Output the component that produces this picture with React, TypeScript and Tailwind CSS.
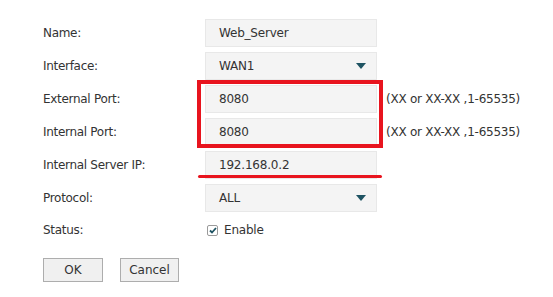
const font = { fontFamily: '"DejaVu Sans", Verdana, sans-serif' };

function Field({ value, select }: { value: string; select?: boolean }) {
  return (
    <div className="flex h-[28px] w-[172px] items-center justify-between border border-[#e8e8e8] bg-[#f4f4f4] pl-[13px] pr-[10px] text-[12px] tracking-[-0.2px] text-[#333]">
      <span>{value}</span>
      {select && (
        <svg width="10" height="6" viewBox="0 0 10 6">
          <path d="M0 0h10L5 6z" fill="#1e5362" />
        </svg>
      )}
    </div>
  );
}

function Row({ label, children, hint }: { label: string; children: React.ReactNode; hint?: boolean }) {
  return (
    <div className="flex items-center">
      <div className="w-[162px] text-[12px] tracking-[-0.3px] text-[#333]">{label}</div>
      {children}
      {hint && (
        <span className="ml-[9px] text-[12px] tracking-[-0.25px] text-[#333]">(XX or XX-XX ,1-65535)</span>
      )}
    </div>
  );
}

export default function App() {
  return (
    <div className="relative h-[297px] w-[553px] bg-white" style={font}>
      <div className="flex flex-col gap-[5px] pl-[43px] pt-[19px]">
        <Row label="Name:">
          <Field value="Web_Server" />
        </Row>
        <Row label="Interface:">
          <Field value="WAN1" select />
        </Row>
        <Row label="External Port:" hint>
          <Field value="8080" />
        </Row>
        <Row label="Internal Port:" hint>
          <Field value="8080" />
        </Row>
        <Row label="Internal Server IP:">
          <Field value="192.168.0.2" />
        </Row>
        <Row label="Protocol:">
          <Field value="ALL" select />
        </Row>
        <Row label="Status:">
          <div className="flex h-[26px] items-center gap-[6px] pl-[2px] text-[12px] tracking-[-0.2px] text-[#333]">
            <span className="flex h-[11px] w-[11px] items-center justify-center rounded-[2px] border border-[#9a9a9a] bg-white">
              <svg width="8" height="7" viewBox="0 0 8 7">
                <path d="M1 3.5l2 2L7 1" fill="none" stroke="#1e5362" strokeWidth="1.8" />
              </svg>
            </span>
            <span>Enable</span>
          </div>
        </Row>
        <div className="mt-[10px] flex gap-[17px] text-[12px] text-[#333]">
          <button className="h-[24px] w-[60px] border border-[#adadad] bg-[#f0f0f0]">OK</button>
          <button className="h-[24px] w-[59px] border border-[#adadad] bg-[#f0f0f0]">Cancel</button>
        </div>
      </div>

      {/* annotations */}
      <div className="absolute left-[197px] top-[80px] h-[68px] w-[186px] border-[4px] border-[#e8141e]" />
      <div className="absolute left-[198px] top-[175px] h-[3px] w-[184px] rounded-full bg-[#e8141e]" />
    </div>
  );
}
